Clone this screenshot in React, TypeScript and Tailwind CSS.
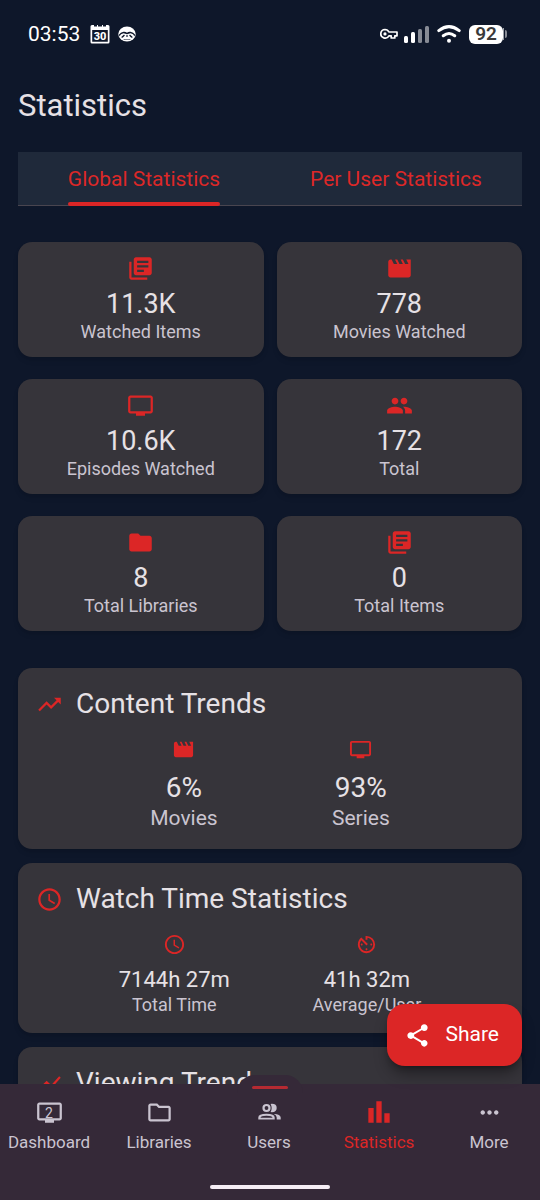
import type { ComponentType, ReactNode } from "react";
import {
  MdAccessTime,
  MdAvTimer,
  MdBarChart,
  MdFolder,
  MdLibraryBooks,
  MdMoreHoriz,
  MdMovie,
  MdOutlineFolder,
  MdOutlineTv,
  MdPeople,
  MdShare,
  MdShowChart,
  MdTrendingUp,
} from "react-icons/md";

type Icon = ComponentType<{ className?: string }>;

function StatusBar() {
  return (
    <header className="flex h-17 shrink-0 items-center justify-between pr-[33px] pl-7 text-white">
      <div className="flex items-center gap-2">
        <span className="text-[21px] leading-7">03:53</span>
        <svg viewBox="0 0 20 20" className="ml-0.5 size-5" aria-hidden="true">
          <path
            fill="currentColor"
            fillRule="evenodd"
            d="M2 1h2v1.500h3V1h1v1.500h4V1h1v1.500h3V1h2q1.500 0 1.500 1.500v15.500q0 1.500-1.500 1.500H2Q.5 19.500.5 18V2.500Q.5 1 2 1zM2.200 6v11.800h15.600V6z"
          />
          <text x="10" y="15.800" textAnchor="middle" fontSize="11" fontWeight="800" fill="currentColor">
            30
          </text>
        </svg>
        <Sloth />
      </div>
      <div className="flex items-center gap-2">
        <svg viewBox="0 0 18 12" className="-mr-0.5 h-3 w-[18px]" aria-hidden="true">
          <path
            d="M5 1.500a4.300 4.300 0 1 0 3.900 6.300h2.300V10h3.600V7.800H17V4H8.900A4.300 4.300 0 0 0 5 1.500z"
            fill="none"
            stroke="currentColor"
            strokeWidth="1.700"
            strokeLinejoin="round"
          />
          <circle cx="5" cy="5.900" r="1.600" fill="currentColor" />
        </svg>
        <svg viewBox="0 0 25 18" className="h-[18px] w-[25px]" fill="currentColor" aria-hidden="true">
          <rect x="0" y="11" width="4" height="7" rx="1.500" />
          <rect x="7" y="7" width="4" height="11" rx="1.500" />
          <rect x="14" y="4" width="4" height="14" rx="1.500" opacity=".5" />
          <rect x="21" y="1" width="4" height="17" rx="1.500" opacity=".5" />
        </svg>
        <svg viewBox="0 0 24 18" className="h-[18px] w-6" fill="none" stroke="currentColor" strokeWidth="3" strokeLinecap="round" aria-hidden="true">
          <path d="M1.800 5.600Q12-2.400 22.200 5.600M6.300 10.700Q12 6.200 17.700 10.700" />
          <circle cx="12" cy="15.700" r="2" fill="currentColor" stroke="none" />
        </svg>
        <div className="flex items-center">
          <span className="flex h-[19px] w-[34px] items-center justify-center rounded-md bg-white text-[19px] leading-5 font-semibold text-[#3a3a3a]">
            92
          </span>
          <span className="h-3 w-px bg-white/60" />
          <span className="ml-px h-2 w-0.5 rounded-r-sm bg-white/50" />
        </div>
      </div>
    </header>
  );
}

function Sloth() {
  return (
    <svg viewBox="0 0 18 16" className="h-4 w-[18px]" aria-hidden="true">
      <ellipse cx="9" cy="8" rx="8.700" ry="7.600" fill="#fff" />
      <path
        d="M1 8.500Q2.500 6.500 5.500 5.800 7.500 5.500 9 6.800 10.500 5.500 12.500 5.800 15.500 6.500 17 8.500L16.600 10.500 15 8.300 12.500 7.300 9 8.200 5.500 7.300 3 8.300 1.400 10.500z"
        fill="#0e172a"
      />
      <path d="M3 11.200l3-2.700.9 1.100-2.200 2.200zM15 11.200l-3-2.700-.9 1.100 2.200 2.200zM5.500 13.400q3.500 1.300 7 0l-.3-.5q-3.200 1-6.400 0z" fill="#0e172a" />
      <ellipse cx="9" cy="10" rx="1.100" ry=".7" fill="#0e172a" />
    </svg>
  );
}

function UsersIcon({ className }: { className?: string }) {
  return (
    <svg viewBox="0 0 28 28" className={className} fill="currentColor" aria-hidden="true">
      <circle cx="11.500" cy="10" r="3" fill="none" stroke="currentColor" strokeWidth="2.200" />
      <path d="M15.600 14.100q2.200-4.100 0-8.200 6.100-.6 6.100 4.100t-6.100 4.100z" />
      <path
        fillRule="evenodd"
        d="M3.300 21.600v-2.200q0-3.700 8.200-3.700t8.200 3.700v2.200zM5.500 19.700h12q0-2-6-2t-6 2z"
      />
      <path d="M18.800 16q6.900.4 6.900 3.600v2h-4v-2.200q0-2.200-2.900-3.400z" />
    </svg>
  );
}

function Tab({ active, children }: { active?: boolean; children: ReactNode }) {
  return (
    <button type="button" role="tab" aria-selected={!!active} className="flex flex-1 justify-center text-[21px] text-[#dc2828]">
      <span className="relative flex h-full items-center pt-0.5">
        {children}
        {active && <span className="absolute inset-x-0 -bottom-px h-1 rounded-full bg-[#dc2626]" />}
      </span>
    </button>
  );
}

function StatCard({ icon: I, value, label }: { icon: Icon; value: string; label: string }) {
  return (
    <div className="flex h-[115px] flex-col items-center rounded-[14px] bg-[#36343a] pt-[13px] shadow-md">
      <I className="size-[27px] text-[#dc2626]" />
      <div className="mt-1 text-[27px] leading-9 text-[#e6e1e5]">{value}</div>
      <div className="text-lg leading-5 text-[#cac4d0]">{label}</div>
    </div>
  );
}

function Panel({ icon: I, title, children }: { icon: Icon; title: string; children?: ReactNode }) {
  return (
    <section className="rounded-[14px] bg-[#36343a] px-[18px] py-[18px] shadow-md">
      <h2 className="flex items-center gap-[13px] text-[28px] leading-9 text-[#e6e1e5]">
        <I className="size-[27px] text-[#dc2626]" />
        {title}
      </h2>
      {children}
    </section>
  );
}

function NavItem({ icon: I, label, active, badge }: { icon: Icon; label: string; active?: boolean; badge?: string }) {
  return (
    <a
      href={"#" + label.toLowerCase()}
      className={
        active
          ? "flex flex-1 flex-col items-center gap-1.5 text-[#dc2626]"
          : "flex flex-1 flex-col items-center gap-1.5 text-[#cac4d0]"
      }
    >
      <span className="relative flex h-7 items-center">
        <I className={active ? "size-8" : label === "Users" ? "size-7" : "size-[27px]"} />
        {badge && <span className="absolute inset-0 flex items-center justify-center pt-0.5 text-sm">{badge}</span>}
      </span>
      <span className="text-[17px] leading-5">{label}</span>
    </a>
  );
}

export default function App() {
  return (
    <div className="flex h-screen flex-col overflow-hidden bg-[#0e172a] font-['Roboto',sans-serif]">
      <StatusBar />
      <main className="flex-1 overflow-y-auto px-[18px] [scrollbar-width:none]">
        <h1 className="pt-4 text-[31px] leading-11 text-[#e6e1e5]">Statistics</h1>
        <div role="tablist" className="mt-6 flex h-[54px] border-b border-[#49454f] bg-[#1f293a]">
          <Tab active>Global Statistics</Tab>
          <Tab>Per User Statistics</Tab>
        </div>
        <div className="mt-9 grid grid-cols-2 gap-x-[13px] gap-y-[22px]">
          <StatCard icon={MdLibraryBooks} value="11.3K" label="Watched Items" />
          <StatCard icon={MdMovie} value="778" label="Movies Watched" />
          <StatCard icon={MdOutlineTv} value="10.6K" label="Episodes Watched" />
          <StatCard icon={MdPeople} value="172" label="Total" />
          <StatCard icon={MdFolder} value="8" label="Total Libraries" />
          <StatCard icon={MdLibraryBooks} value="0" label="Total Items" />
        </div>
        <div className="mt-[37px] flex flex-col gap-3.5">
          <Panel icon={MdTrendingUp} title="Content Trends">
            <div className="mt-4 flex justify-evenly">
              {[
                { icon: MdMovie, value: "6%", label: "Movies" },
                { icon: MdOutlineTv, value: "93%", label: "Series" },
              ].map(({ icon: I, value, label }) => (
                <div key={label} className="flex flex-col items-center">
                  <I className="size-[23px] text-[#dc2626]" />
                  <div className="mt-[9px] text-[28px] leading-9 text-[#e6e1e5]">{value}</div>
                  <div className="text-[21px] leading-[25px] text-[#cac4d0]">{label}</div>
                </div>
              ))}
            </div>
          </Panel>
          <Panel icon={MdAccessTime} title="Watch Time Statistics">
            <div className="mt-4 flex justify-evenly">
              {[
                { icon: MdAccessTime, value: "7144h 27m", label: "Total Time" },
                { icon: MdAvTimer, value: "41h 32m", label: "Average/User" },
              ].map(({ icon: I, value, label }) => (
                <div key={label} className="flex flex-col items-center">
                  <I className="size-[23px] text-[#dc2626]" />
                  <div className="mt-[9px] text-[22px] leading-[29px] text-[#e6e1e5]">{value}</div>
                  <div className="text-lg leading-[21px] text-[#cac4d0]">{label}</div>
                </div>
              ))}
            </div>
          </Panel>
          <Panel icon={MdShowChart} title="Viewing Trends" />
        </div>
      </main>
      <nav className="relative shrink-0 bg-[#352938] pb-[11px]">
        <button
          type="button"
          className="absolute right-[18px] bottom-full mb-[18px] flex h-[62px] items-center gap-3.5 rounded-[18px] bg-[#dc2626] pr-[23px] pl-[17px] text-[21px] text-white shadow-lg shadow-black/40"
        >
          <MdShare className="size-[27px]" />
          Share
        </button>
        <div className="absolute -top-[9px] left-1/2 flex h-[18px] w-[66px] -translate-x-1/2 justify-center rounded-t-[18px] bg-[#352938] pt-[11px]">
          <span className="h-[3px] w-9 rounded-full bg-[#b52a32]" />
        </div>
        <div className="relative -mr-1 -ml-1.5 flex pt-3.5">
          <NavItem icon={MdOutlineTv} label="Dashboard" badge="2" />
          <NavItem icon={MdOutlineFolder} label="Libraries" />
          <NavItem icon={UsersIcon} label="Users" />
          <NavItem icon={MdBarChart} label="Statistics" active />
          <NavItem icon={MdMoreHoriz} label="More" />
        </div>
        <div className="mx-auto mt-[33px] h-1 w-30 rounded-full bg-[#f5edf5]" />
      </nav>
    </div>
  );
}
